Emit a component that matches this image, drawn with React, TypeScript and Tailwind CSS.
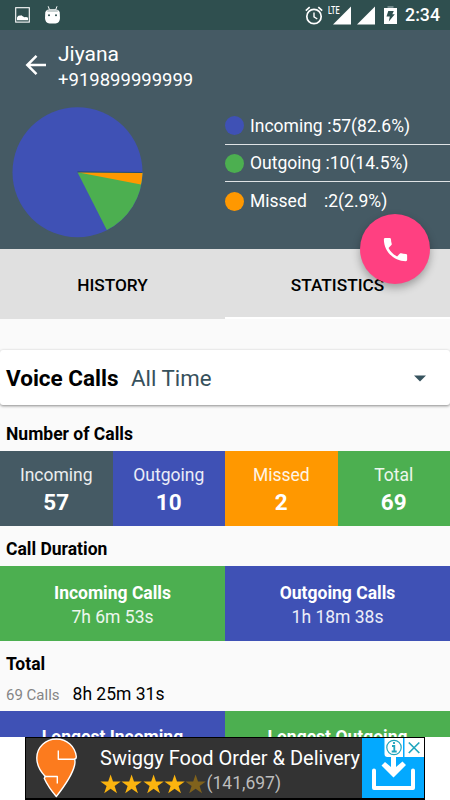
import type { ReactNode } from 'react';

const legend = [
  { label: 'Incoming', value: ':57(82.6%)', dot: 'bg-[#3f51b5]' },
  { label: 'Outgoing', value: ':10(14.5%)', dot: 'bg-[#4caf50]' },
  { label: 'Missed', value: ':2(2.9%)', dot: 'bg-[#ff9800]' },
]

const counts = [
  { label: 'Incoming', value: 57, color: 'bg-[#455a64]' },
  { label: 'Outgoing', value: 10, color: 'bg-[#3f51b5]' },
  { label: 'Missed', value: 2, color: 'bg-[#ff9800]' },
  { label: 'Total', value: 69, color: 'bg-[#4caf50]' },
]

const durations = [
  { label: 'Incoming Calls', value: '7h 6m 53s', color: 'bg-[#4caf50]' },
  { label: 'Outgoing Calls', value: '1h 18m 38s', color: 'bg-[#3f51b5]' },
]

const longest = [
  { label: 'Longest Incoming', color: 'bg-[#3f51b5]' },
  { label: 'Longest Outgoing', color: 'bg-[#4caf50]' },
]

const StatusBar = () => (
  <div className="flex h-[30px] shrink-0 items-center justify-between bg-[#2f4f4f] pl-[15px] pr-[10px] text-white">
    <div className="flex items-center gap-[15px]">
      <svg width="15" height="16" viewBox="0 0 15 16">
        <rect x="0.7" y="0.7" width="13.6" height="14.4" fill="none" stroke="#fff" strokeWidth="1.1" />
        <path d="M2 13.200V10.500q1.200-2.500 3-1.800 1.200-1.200 2.300.2 1.500 1 2.200 1.300 2.200-.8 3.500.6v2.400z" fill="#fff" />
      </svg>
      <svg width="15" height="18" viewBox="0 0 15 18">
        <path d="M3.200.3l1.200 3.200M12 .3l-1.200 3.200" stroke="#fff" strokeWidth="1" />
        <path d="M.3 6Q1.500 3.300 4.500 3.200h6Q13.700 3.300 14.700 6L15 12q-.2 5.300-4.500 5.500h-6Q.2 17.300 0 12z" fill="#fff" />
        <path d="M2.300 4.200h10.500v1.600H2.300z" fill="#b9c4c4" />
        <circle cx="4" cy="9.300" r="1" fill="#2f4f4f" />
        <circle cx="11" cy="9.300" r="1" fill="#2f4f4f" />
      </svg>
    </div>
    <div className="flex items-center">
      <svg width="18" height="19" viewBox="0 0 18 19" fill="none" stroke="#fff">
        <circle cx="9" cy="10.500" r="7.200" strokeWidth="1.700" />
        <path d="M9 6.500v4.300l3.300 2.200" strokeWidth="1.400" />
        <path d="M.8 4.600L4.700 1.200M17.200 4.600L13.300 1.200" strokeWidth="1.700" />
      </svg>
      <div className="flex pl-[5px]">
        <span className="-mr-[7px] h-[18px] w-[12px] origin-left scale-x-[0.72] text-[10px] leading-[10px] font-medium">LTE</span>
        <svg width="18" height="19" viewBox="0 0 18 19">
          <path d="M0 18.500L18 0.500V18.500z" fill="#fff" />
        </svg>
      </div>
      <svg className="ml-[6px]" width="18" height="19" viewBox="0 0 18 19">
        <path d="M0 18.500L18 0.500V18.500z" fill="#fff" />
      </svg>
      <svg className="ml-[9px]" width="13" height="18" viewBox="0 0 13 18">
        <path d="M3.500 0h6v2h-6z" fill="#71898a" />
        <path d="M0 2h13v16H0z" fill="#fff" />
        <path d="M4.300 5h5.500L8.300 8.300h2.500L4.800 15.500l1-5H2.500z" fill="#2f4f4f" />
      </svg>
      <span className="ml-[8px] pt-[2px] text-[17.750px] leading-none font-medium">2:34</span>
    </div>
  </div>
)

const CallPie = () => (
  <svg className="block" width="131" height="131" viewBox="0 0 131 131">
    <circle cx="65.500" cy="65.200" r="65" fill="#3f51b5" />
    <path d="M65.500 65.200L130.500 65.200A65 65 0 0 1 94.800 123z" fill="#4caf50" />
    <path d="M65.500 65.200L130.500 65.700A65 65 0 0 1 128.900 77.400z" fill="#ff9800" />
    <path d="M65.500 64.900L130.500 65.500" stroke="#234a72" strokeWidth="1" />
  </svg>
)

const Header = () => (
  <header className="flex h-[219px] shrink-0 flex-col bg-[#455a64] text-white">
    <div className="flex h-[77px] pl-[25px]">
      <svg className="mt-[24px]" width="22" height="22" viewBox="0 0 22 22" fill="none" stroke="#fff" strokeWidth="2.500">
        <path d="M21 11H2.500M11.500 1.800L2.300 11l9.200 9.200" />
      </svg>
      <div className="flex flex-col pl-[11px] pt-[11px]">
        <span className="text-[21px] leading-[26px]">Jiyana</span>
        <span className="text-[18.500px] leading-[26px]">+919899999999</span>
      </div>
    </div>
    <div className="flex">
      <div className="w-[225px] pl-[12px]">
        <CallPie />
      </div>
      <div className="flex flex-1 flex-col divide-y divide-[#dfe3e5]">
        {legend.map(item => (
          <div key={item.label} className="flex h-[37.500px] items-center pt-[1px] text-[17.500px]">
            <span className={`mr-[6px] size-[19px] rounded-full ${item.dot}`} />
            <span className={item.label === 'Missed' ? 'w-[74px]' : 'mr-[4.500px]'}>{item.label}</span>
            <span>{item.value}</span>
          </div>
        ))}
      </div>
    </div>
  </header>
)

const Tabs = () => (
  <div className="relative flex h-[70px] shrink-0 bg-[#e0e0e0] text-[17.250px] font-medium text-black">
    <div className="flex flex-1 items-center justify-center pt-[3px]">HISTORY</div>
    <div className="flex flex-1 items-center justify-center border-b-2 border-white pt-[5px]">STATISTICS</div>
    <button className="absolute -top-[35px] right-[20px] flex size-[70px] items-center justify-center rounded-full bg-[#ff4081] shadow-[0_4px_8px_rgba(0,0,0,0.3)]">
      <svg width="31" height="31" viewBox="0 0 24 24" fill="#fff">
        <path d="M6.620 10.790c1.440 2.830 3.760 5.140 6.590 6.590l2.200-2.200c.27-.27.67-.36 1.020-.24 1.120.37 2.330.57 3.570.57.55 0 1 .45 1 1V20c0 .55-.45 1-1 1-9.390 0-17-7.610-17-17 0-.55.45-1 1-1h3.500c.55 0 1 .45 1 1 0 1.250.2 2.450.57 3.570.11.35.03.74-.25 1.020l-2.200 2.200z" />
      </svg>
    </button>
  </div>
)

const SectionTitle = ({ children }: { children: ReactNode }) => (
  <h2 className="flex h-[40px] shrink-0 items-center pl-[6px] pt-[6px] text-[17.500px] font-bold text-black">{children}</h2>
)

const SwiggyLogo = () => (
  <svg width="42" height="60" viewBox="0 0 42 60" fill="#fc7b1e" stroke="#fff" strokeWidth="1.400" strokeLinejoin="round">
    <path d="M38.500 21.300Q39.500 23 38.500 27.500C36 38 27 50 20.300 58.500 15.500 53 11 46.500 8.200 40.300L9.300 38.500C4.500 33.500.8 27 .8 20 .8 9.500 9.500 1 20.500 1 31 1 39 8.500 40.300 18.500Q40.300 21 38.500 21.300z" />
    <path d="M8.500 38.500H21.300V45.500" fill="none" />
    <path d="M22.300 12.500V21.300H39" fill="none" />
  </svg>
)

const Star = ({ color }: { color: string }) => (
  <svg width="21.300" height="20" viewBox="0 0 21.300 20">
    <path d="M10.600 .5l2.400 7h7.800l-6.200 4.400 2.400 7.400-6.400-4.600-6.400 4.600 2.400-7.400L.4 7.500h7.800z" fill={color} />
  </svg>
)

const AdBanner = () => (
  <div className="flex h-[63px] shrink-0 justify-center bg-white">
    <div className="flex h-full w-[400px] border border-b-2 border-black bg-[#333]">
      <div className="w-[74px] pl-[10px]">
        <SwiggyLogo />
      </div>
      <div className="flex w-[262px] flex-col whitespace-nowrap">
        <span className="pt-[7px] text-[20px] leading-[26px] text-white">Swiggy Food Order &amp; Delivery</span>
        <div className="flex items-center pt-[1px] text-[17.500px] leading-[23px] text-[#bdbdbd]">
          {[0, 1, 2, 3].map(i => <Star key={i} color="#fbb40f" />)}
          <Star color="#80621c" />
          <span>(141,697)</span>
        </div>
      </div>
      <svg width="62" height="60" viewBox="0 0 62 60">
        <path d="M0 0h62v61H0z" fill="#03a9ff" />
        <path d="M12 32.500v17.500h39V32.500" fill="none" stroke="#fff" strokeWidth="4" strokeLinecap="round" strokeLinejoin="round" />
        <path d="M29 17h5v12l6.500-5.500 3.500 3.500L31.500 39.500 19.500 27.500 23 24l6 5z" fill="#fff" />
        <path d="M22.500 0h18.500v19h-15.500q-3 0-3-3zM42.500 0h19.500v19H42.500z" fill="#fff" />
        <g fill="none" stroke="#20a5bd">
          <circle cx="32" cy="9.500" r="7.200" strokeWidth="1.200" />
          <path d="M30 8h2.300v5.500M29.700 13.500h5M32 4v2" strokeWidth="1.800" />
          <path d="M46.800 4.500l10.500 10.500M57.300 4.500L46.800 15" strokeWidth="1.700" />
        </g>
      </svg>
    </div>
  </div>
)

export default function App() {
  return (
    <div className="flex h-[800px] w-[450px] flex-col overflow-hidden bg-[#fafafa] font-[Roboto,sans-serif]">
      <StatusBar />
      <Header />
      <Tabs />
      <main className="flex min-h-0 flex-1 flex-col overflow-hidden pt-[31px]">
        <div className="flex h-[55px] shrink-0 items-center rounded-[3px] bg-white pl-[6px] pr-[24px] pt-[2px] text-[22.500px] shadow-[0_1px_3px_rgba(0,0,0,0.45)]">
          <span className="font-bold text-black">Voice Calls</span>
          <span className="ml-[12.500px] flex-1 text-[22.250px] text-[#37515c]">All Time</span>
          <svg width="12" height="7" viewBox="0 0 12 7">
            <path d="M0 .5h12l-6 6z" fill="#37535e" />
          </svg>
        </div>

        <div className="h-[6px] shrink-0" />
        <SectionTitle>Number of Calls</SectionTitle>
        <div className="grid h-[75px] shrink-0 grid-cols-4 text-white">
          {counts.map(item => (
            <div key={item.label} className={`flex flex-col items-center pt-[11px] ${item.color}`}>
              <span className="text-[17.500px] leading-[27px] text-white/90">{item.label}</span>
              <span className="text-[22.500px] leading-[27px] font-bold">{item.value}</span>
            </div>
          ))}
        </div>

        <SectionTitle>Call Duration</SectionTitle>
        <div className="grid h-[75px] shrink-0 grid-cols-2 text-[17.500px] text-white">
          {durations.map(item => (
            <div key={item.label} className={`flex flex-col items-center pt-[15px] leading-[24px] ${item.color}`}>
              <span className="font-bold">{item.label}</span>
              <span className="text-white/90">{item.value}</span>
            </div>
          ))}
        </div>

        <SectionTitle>Total</SectionTitle>
        <div className="flex h-[30px] shrink-0 items-baseline pl-[6px] text-[17.500px] text-black">
          <span className="text-[15px] text-[#858585]">69 Calls</span>
          <span className="ml-[13px]">8h 25m 31s</span>
        </div>
        <div className="grid h-[75px] shrink-0 grid-cols-2 text-[17.500px] font-bold text-white">
          {longest.map(item => (
            <div key={item.label} className={`pt-[14px] text-center leading-[24px] ${item.color}`}>{item.label}</div>
          ))}
        </div>
      </main>
      <AdBanner />
    </div>
  );
}
